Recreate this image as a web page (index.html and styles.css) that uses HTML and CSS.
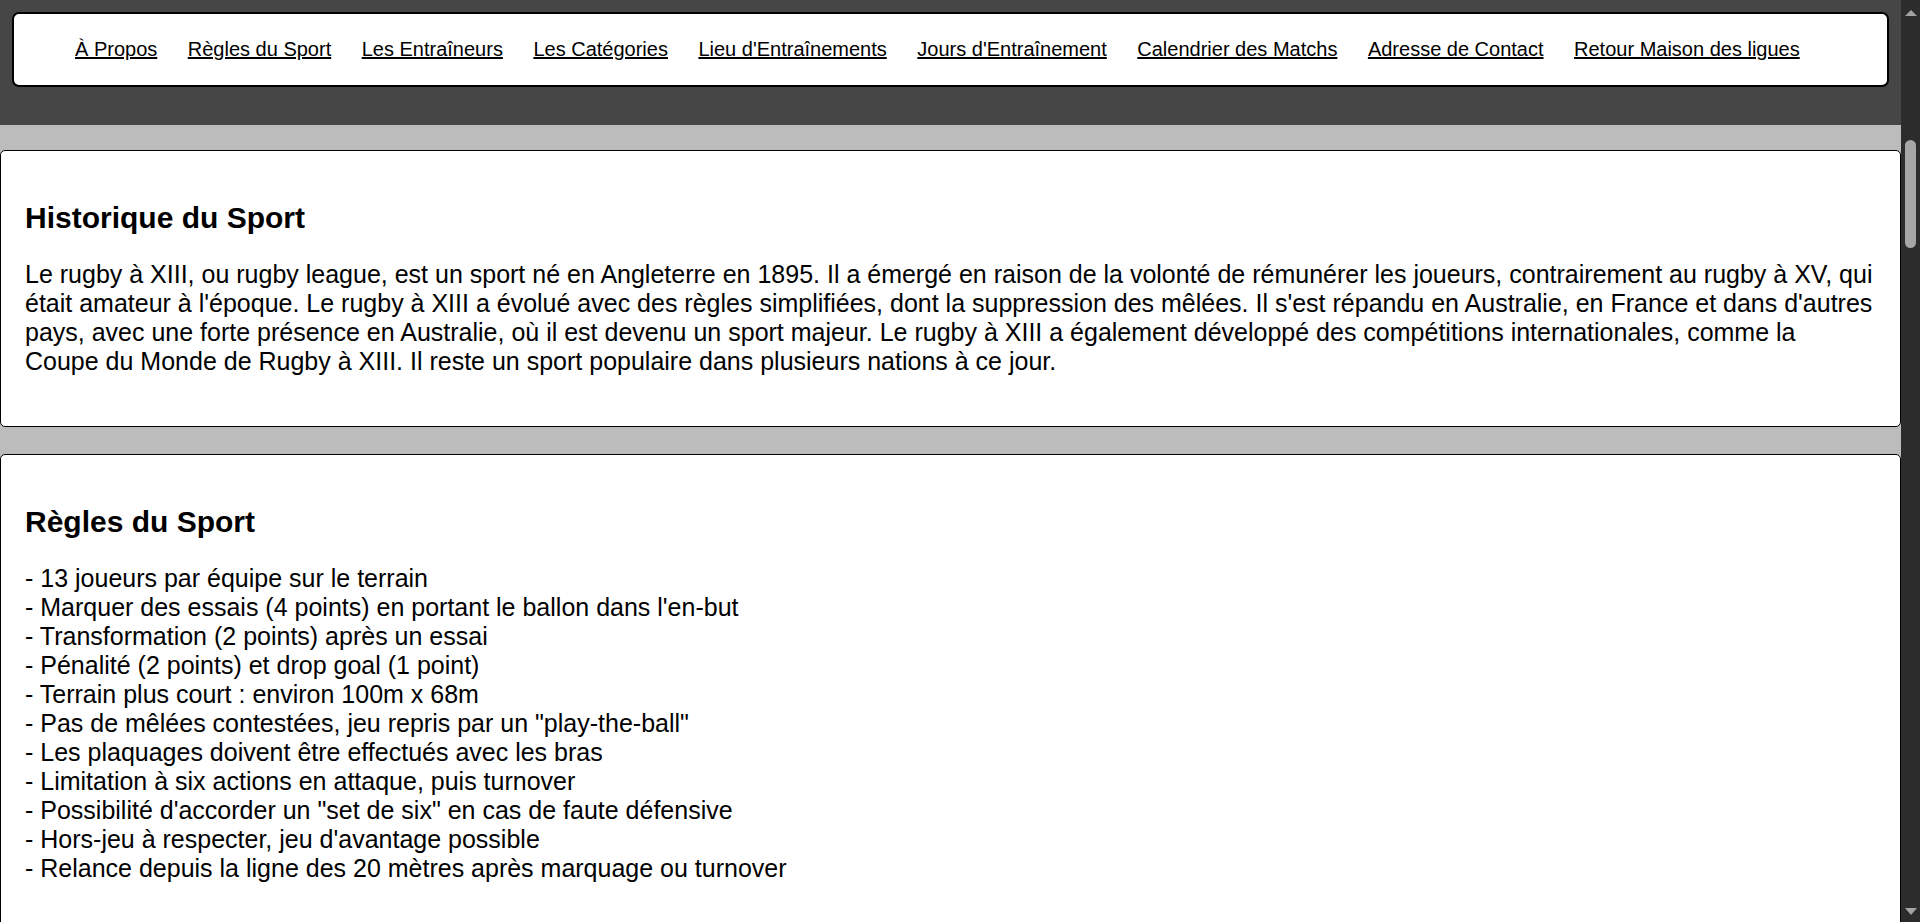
FILE: index.html
```html
<!DOCTYPE html>
<html lang="fr">
<head>
<meta charset="utf-8">
<title>Rugby à XIII</title>
<link rel="stylesheet" href="styles.css">
</head>
<body>
<div class="viewport">
  <header class="site-header">
    <nav class="nav">
      <a href="#apropos">À Propos</a>
      <a href="#regles">Règles du Sport</a>
      <a href="#entraineurs">Les Entraîneurs</a>
      <a href="#categories">Les Catégories</a>
      <a href="#lieu">Lieu d'Entraînements</a>
      <a href="#jours">Jours d'Entraînement</a>
      <a href="#calendrier">Calendrier des Matchs</a>
      <a href="#contact">Adresse de Contact</a>
      <a href="#retour">Retour Maison des ligues</a>
    </nav>
  </header>
  <main class="content">
    <section class="card" id="apropos">
      <h2 class="card-title">Historique du Sport</h2>
      <p class="card-text">Le rugby à XIII, ou rugby league, est un sport né en Angleterre en 1895. Il a émergé en raison de la volonté de rémunérer les joueurs, contrairement au rugby à XV, qui était amateur à l'époque. Le rugby à XIII a évolué avec des règles simplifiées, dont la suppression des mêlées. Il s'est répandu en Australie, en France et dans d'autres pays, avec une forte présence en Australie, où il est devenu un sport majeur. Le rugby à XIII a également développé des compétitions internationales, comme la Coupe du Monde de Rugby à XIII. Il reste un sport populaire dans plusieurs nations à ce jour.</p>
    </section>
    <section class="card" id="regles">
      <h2 class="card-title">Règles du Sport</h2>
      <p class="card-text">- 13 joueurs par équipe sur le terrain<br>
- Marquer des essais (4 points) en portant le ballon dans l'en-but<br>
- Transformation (2 points) après un essai<br>
- Pénalité (2 points) et drop goal (1 point)<br>
- Terrain plus court : environ 100m x 68m<br>
- Pas de mêlées contestées, jeu repris par un "play-the-ball"<br>
- Les plaquages doivent être effectués avec les bras<br>
- Limitation à six actions en attaque, puis turnover<br>
- Possibilité d'accorder un "set de six" en cas de faute défensive<br>
- Hors-jeu à respecter, jeu d'avantage possible<br>
- Relance depuis la ligne des 20 mètres après marquage ou turnover</p>
    </section>
  </main>
</div>
<div class="scrollbar" aria-hidden="true">
  <div class="sb-arrow sb-up"></div>
  <div class="sb-track"><div class="sb-thumb"></div></div>
  <div class="sb-arrow sb-down"></div>
</div>
</body>
</html>
```

FILE: styles.css
```css
html,
body {
  height: 100%;
}

body {
  margin: 0;
  display: flex;
  overflow: hidden;
  font-family: "Liberation Sans", Arial, sans-serif;
  font-size: 25px;
  color: #000;
  background: #bcbcbc;
}

.viewport {
  flex: 1;
  min-width: 0;
  height: 100vh;
  overflow: hidden;
  background: #bcbcbc;
}

/* window scrollbar */
.scrollbar {
  width: 19px;
  flex: none;
  height: 100vh;
  display: flex;
  flex-direction: column;
  background: #2c2c2c;
}

.sb-arrow {
  height: 17px;
  flex: none;
  display: flex;
  justify-content: center;
}

.sb-up {
  align-items: flex-start;
  padding-top: 10px;
  box-sizing: border-box;
}

.sb-up::before {
  content: "";
  width: 0;
  height: 0;
  border-left: 6px solid transparent;
  border-right: 6px solid transparent;
  border-bottom: 6px solid #a3a3a3;
}

.sb-down {
  align-items: flex-end;
  padding-bottom: 7px;
  box-sizing: border-box;
}

.sb-down::before {
  content: "";
  width: 0;
  height: 0;
  border-left: 6px solid transparent;
  border-right: 6px solid transparent;
  border-top: 7px solid #a3a3a3;
}

.sb-track {
  flex: 1;
  padding-top: 123px;
}

.sb-thumb {
  width: 11px;
  height: 108px;
  margin-left: 4px;
  border-radius: 6px;
  background: #a6a6a6;
}

/* page */
.site-header {
  background: #464646;
  padding: 12px 12px 38px 12px;
}

.nav {
  display: flex;
  align-items: center;
  gap: 30.5px;
  background: #fff;
  border: 2px solid #000;
  border-radius: 7px;
  padding: 24px 20px 24px 61px;
  font-size: 20px;
  line-height: 23px;
}

.nav a {
  color: #000;
  text-decoration: underline;
  white-space: nowrap;
}

.content {
  padding-top: 25px;
}

.card {
  background: #fff;
  border: 1px solid #000;
  border-radius: 5px;
  padding: 25px 24px;
  margin-bottom: 27px;
}

.card-title {
  font-size: 30px;
  font-weight: bold;
  margin: 25px 0;
}

.card-text {
  margin: 25px 0;
}
```
